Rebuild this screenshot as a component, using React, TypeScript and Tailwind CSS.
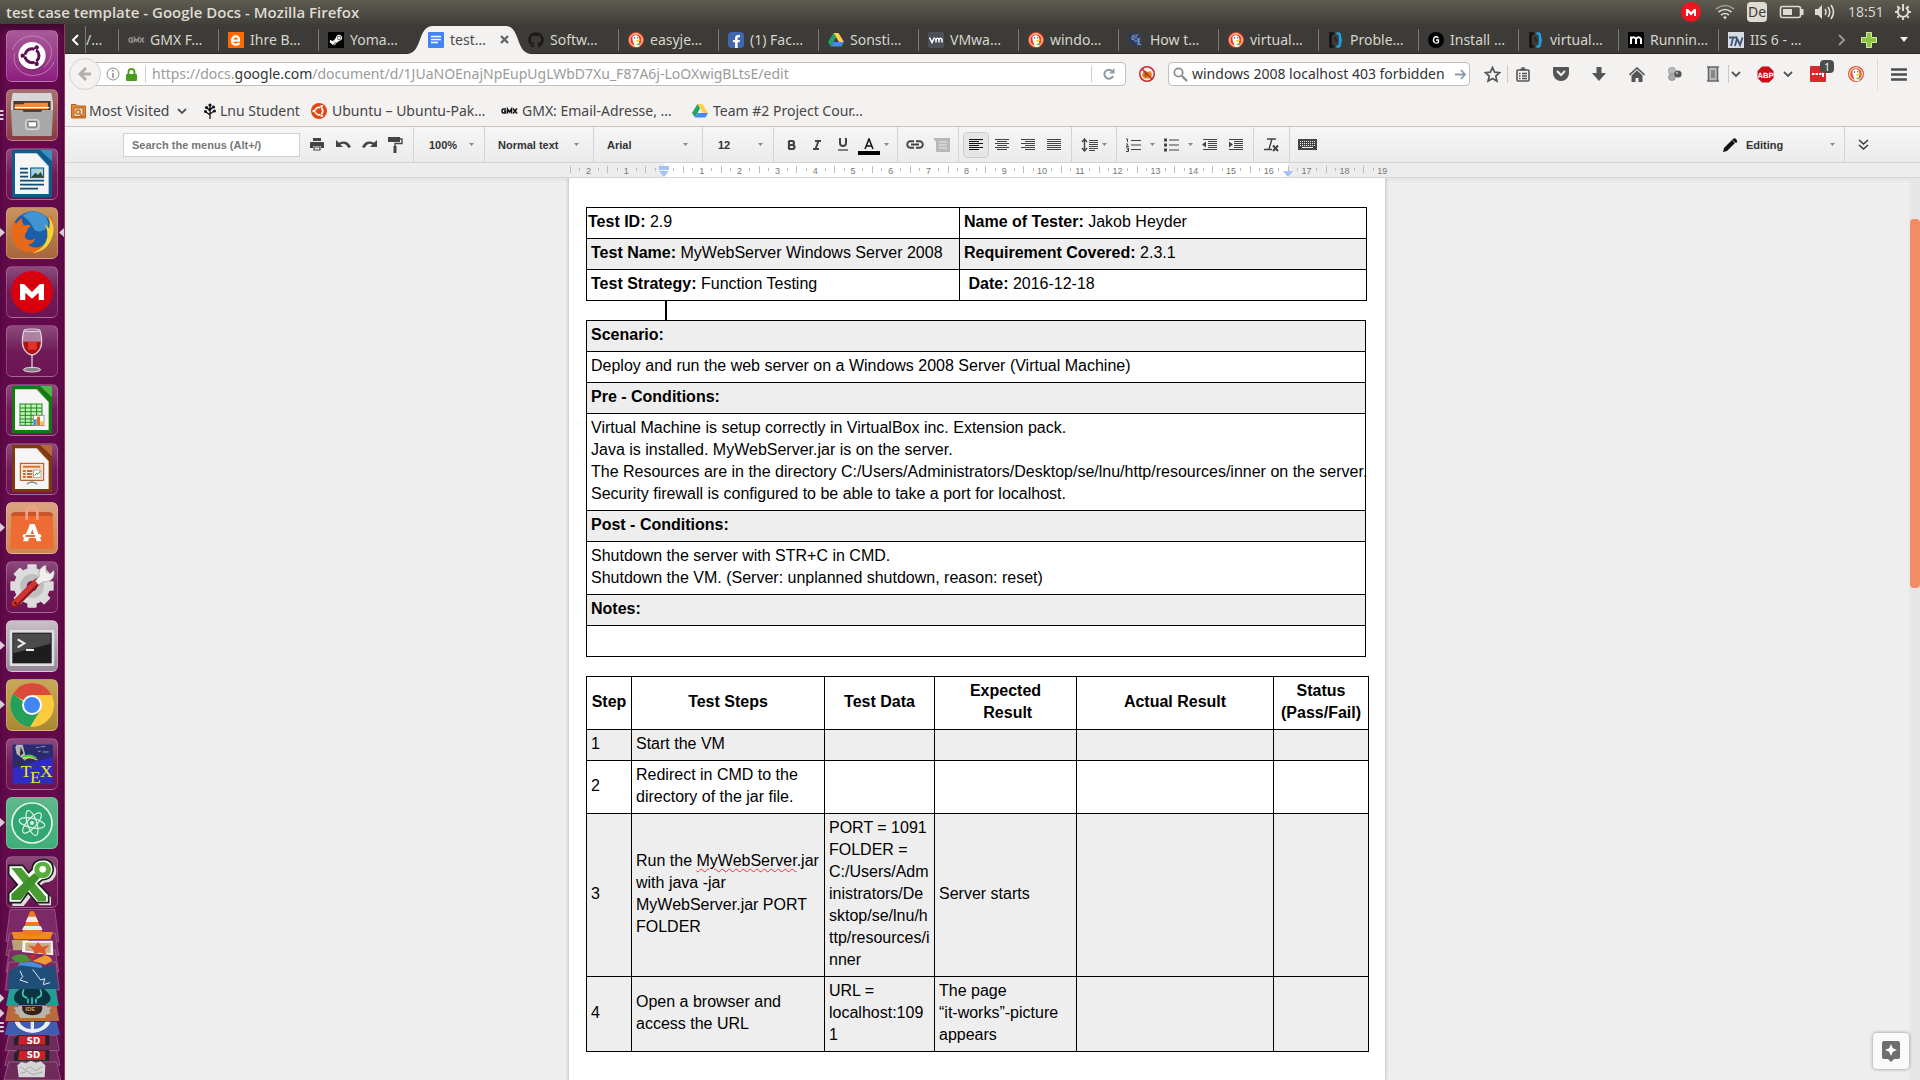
import React from "react";
import { FaFacebookF, FaGithub, FaSteamSymbol } from "react-icons/fa";

type Kids = { children?: React.ReactNode };

/* ---------- favicons ---------- */

const Duck = ({ ring = "#de5833" }: { ring?: string }) => (
  <svg width="16" height="16" viewBox="0 0 32 32">
    <circle cx="16" cy="16" r="16" fill={ring} />
    <circle cx="16" cy="16" r="12.6" fill={ring} stroke="#fff" strokeWidth="2" />
    <path d="M9 10c2-4 9-5 12-1 3 4 1 9 1 12l1 8c-4 2-8 1-9 0C11 22 8 15 9 10z" fill="#fff" />
    <path d="M17 16c3-2 8-1 9 0-2 2-5 2-8 4-2-1-2-3-1-4z" fill="#fdd20a" />
    <path d="M17 24l6-2v5l-6-1z" fill="#65bc46" />
    <circle cx="13" cy="12" r="1.5" fill="#2d4f8e" />
    <circle cx="19" cy="11.5" r="1.3" fill="#2d4f8e" />
  </svg>
);
const Drive = () => (
  <svg width="16" height="16" viewBox="0 0 32 32">
    <path d="M11 2h10l11 18H22z" fill="#ffcf48" />
    <path d="M11 2l5 9L6 29 0 20z" fill="#1fa463" />
    <path d="M11 20h21l-5 9H6z" fill="#4688f4" />
  </svg>
);
const Gmx = ({ fill }: { fill: string }) => (
  <svg width="17" height="16" viewBox="0 0 34 32">
    <g fill="none" stroke={fill} strokeWidth="3">
      <path d="M10 12H5q-3 0-3 4t3 4h4v-4H6" />
      <path d="M13 21v-9l4 6 4-6v9" />
      <path d="M24 11l8 10M32 11l-8 10" />
    </g>
  </svg>
);
const Eplus = () => (
  <svg width="16" height="16" viewBox="0 0 32 32">
    <rect width="32" height="32" fill="#ff6a00" />
    <path d="M8 17h14c2-11-13-11-14 0 0 10 11 10 15 5" fill="none" stroke="#fff" strokeWidth="4.5" />
  </svg>
);
const Steam = () => (
  <span className="flex h-4 w-4 items-center justify-center bg-black text-white">
    <FaSteamSymbol size={14} />
  </span>
);
const DocsIcon = () => (
  <svg width="16" height="16" viewBox="0 0 16 16">
    <rect width="16" height="16" rx="1" fill="#4285f4" />
    <path d="M3 4.5h10M3 7.5h10M3 10.5h7" stroke="#fff" strokeWidth="1.3" />
  </svg>
);
const Facebook = () => (
  <span className="flex h-4 w-4 items-end justify-center rounded-sm bg-[#4267b2] text-white">
    <FaFacebookF size={13} />
  </span>
);
const VmIcon = () => (
  <svg width="16" height="16" viewBox="0 0 32 32">
    <rect width="32" height="32" rx="4" fill="#4b4f57" />
    <path d="M3 11l5 10 5-10M16 21v-9M16 15q3-5 6 0v6M22 15q3-5 6 0v6" fill="none" stroke="#fff" strokeWidth="3" />
  </svg>
);
const HowTo = () => (
  <svg width="16" height="16" viewBox="0 0 32 32">
    <path d="M2 2h8l4 4v22l-6-4H2z" fill="#2c3a5c" />
    <path d="M12 4h16v24H16z" fill="#31405f" />
    <path d="M8 9l4-3v9H8zM15 6h5M16 8v6M12 18h10l-3 8M18 15l6-2M22 12v13h4" fill="none" stroke="#7fa3d3" strokeWidth="2" />
  </svg>
);
const Braces = () => (
  <svg width="18" height="16" viewBox="0 0 36 32">
    <path d="M12 3H5v26h7" fill="none" stroke="#111" strokeWidth="5" />
    <path d="M17 3q7-1 7 5v4q0 4 4 4-4 0-4 4v4q0 6-7 5" fill="none" stroke="#1ba3e6" strokeWidth="5" />
    <path d="M12 12h4v8" stroke="#151515" strokeWidth="2" fill="none" />
  </svg>
);
const GIcon = () => (
  <svg width="16" height="16" viewBox="0 0 32 32">
    <circle cx="16" cy="16" r="16" fill="#000" />
    <path d="M21 12q-5-5-9 0-3 6 1 9 5 3 8-1v-4h-5" fill="none" stroke="#fff" strokeWidth="2.6" />
  </svg>
);
const MIcon = () => (
  <svg width="16" height="16" viewBox="0 0 32 32">
    <rect width="32" height="32" fill="#000" />
    <path d="M6 24V9M6 14q5-7 10 0v10M16 14q5-7 10 0v10" fill="none" stroke="#fff" strokeWidth="4" />
  </svg>
);
const TnIcon = () => (
  <svg width="16" height="16" viewBox="0 0 32 32">
    <rect width="32" height="32" fill="#d9dde3" />
    <path d="M2 11h15M10 12L6 28M14 28l4-15 6 13 5-15" fill="none" stroke="#3b5379" strokeWidth="3.6" />
  </svg>
);

/* ---------- title bar ---------- */

function TitleBar() {
  return (
    <header className="flex h-6 shrink-0 items-center bg-gradient-to-b from-[#5e5b51] to-[#403f3a] pl-1.5 pr-2 text-[#dfdbd2]">
      <h1 className="text-[15px] font-semibold leading-6 [font-family:'Open_Sans','Noto_Sans',sans-serif]">test case template - Google Docs - Mozilla Firefox</h1>
      <div className="ml-auto flex items-center">
        <svg width="20" height="20" viewBox="0 0 20 20">
          <circle cx="10" cy="10" r="10" fill="#f0141e" />
          <path d="M5 14V7h2l3 3 3-3h2v7h-2v-3.500l-3 3-3-3V14z" fill="#fff" />
        </svg>
        <svg className="ml-3.5" width="20" height="16" viewBox="0 0 20 16" fill="none" stroke="#dfdbd2" strokeWidth="1.6">
          <path d="M1 5q9-7 18 0" opacity=".55" />
          <path d="M3.500 8q6.500-5 13 0M6 11q4-3 8 0" />
          <path d="M8 13q2-1.500 4 0l-2 2.500z" fill="#dfdbd2" stroke="none" />
        </svg>
        <span className="ml-3 flex h-5 w-5 items-center justify-center rounded-sm bg-[#dfdbd2] text-sm leading-5 text-[#3c3b37]">De</span>
        <svg className="ml-3" width="25" height="14" viewBox="0 0 25 14">
          <rect x="1.500" y="1.500" width="20" height="11" rx="2" fill="none" stroke="#dfdbd2" strokeWidth="1.600" />
          <rect x="4" y="4" width="9" height="6" fill="#dfdbd2" />
          <rect x="22" y="4" width="2.500" height="6" fill="#dfdbd2" />
        </svg>
        <svg className="ml-2.5" width="22" height="18" viewBox="0 0 22 18" fill="none" stroke="#dfdbd2" strokeWidth="1.600">
          <path d="M1 6h3l4-4v14l-4-4H1z" fill="#dfdbd2" stroke="none" />
          <path d="M11 6q2 3 0 6M14 4q3.500 5 0 10M17 2q5 7 0 14" />
        </svg>
        <time className="ml-3 w-9 text-sm leading-6 [font-family:'Open_Sans','Noto_Sans',sans-serif]">18:51</time>
        <svg className="ml-2.5" width="18" height="18" viewBox="0 0 18 18" fill="none" stroke="#dfdbd2">
          <path d="M6.200 4.300a5.200 5.200 0 1 0 5.600 0" strokeWidth="2" />
          <path d="M9 1v7" strokeWidth="2" />
          <path d="M1 9h2M15 9h2M3.300 3.300l1.400 1.400M14.700 3.300l-1.400 1.400M3.300 14.700l1.400-1.400M14.700 14.700l-1.400-1.400M9 15v2" strokeWidth="2" />
        </svg>
      </div>
    </header>
  );
}

/* ---------- launcher ---------- */

const Tile = ({ tone, label, children, run }: Kids & { tone: string; label: string; run?: "one" | "many" | "active" }) => (
  <button aria-label={label} className="relative flex w-full justify-center">
    {run === "many" && (
      <svg className="absolute left-0 top-5" width="5" height="12" viewBox="0 0 5 12">
        <path d="M0 1h3l1 1-1 1H0M0 5h3l1 1-1 1H0M0 9h3l1 1-1 1H0" fill="#d8cdd6" />
      </svg>
    )}
    {(run === "one" || run === "active") && (
      <svg className="absolute left-0 top-[21px]" width="5" height="9" viewBox="0 0 5 9">
        <path d="M0 0l5 4.500L0 9z" fill="#d8cdd6" />
      </svg>
    )}
    {run === "active" && (
      <svg className="absolute right-0 top-[21px]" width="5" height="9" viewBox="0 0 5 9">
        <path d="M5 0L0 4.500 5 9z" fill="#d8cdd6" />
      </svg>
    )}
    <span className={`block h-[52px] w-[52px] overflow-hidden rounded-md border border-white/20 ${tone}`}>
      <svg className="-m-px" width="52" height="52" viewBox="0 0 156 156">
        {children}
      </svg>
    </span>
  </button>
);

const plain = "bg-gradient-to-b from-[#8d4a7c] via-[#701b58] to-[#6c1454]";

const OfficeDoc = ({ dark, light, children }: Kids & { dark: string; light: string }) => (
  <>
    <path d="M18 6h92l28 30v112H18z" fill={dark} />
    <path d="M102 6h32q4 0 4 4v30z" fill={light} />
    <path d="M27 16h66l35 38v84H27z" fill="#f5f5f5" />
    <path d="M93 16v0l35 38" stroke={light} strokeWidth="3" />
    {children}
  </>
);

function Launcher() {
  return (
    <nav aria-label="Launcher" className="flex w-[65px] shrink-0 flex-col gap-[7px] overflow-hidden border-r border-[#8b3b66] bg-[#640a4c] pt-1.5 shadow-[inset_0_6px_6px_rgba(0,0,0,0.35)]">
      <Tile label="Search" tone="bg-gradient-to-b from-[#a65a97] to-[#8f1b80]">
        <path d="M20 60C34 14 100 0 132 46c10 20 2 50-18 66M26 70c-10 34 20 70 60 66 30-2 50-20 58-40" fill="none" stroke="#d39acb" strokeWidth="3" opacity=".7" />
        <circle cx="78" cy="80" r="41" fill="#4d0a3f" opacity=".4" />
        <circle cx="78" cy="77" r="41" fill="#fff" />
        <circle cx="78" cy="77" r="21" fill="none" stroke="#5e1150" strokeWidth="9" />
        <path d="M78 77H40M78 77l19-33M78 77l19 33" stroke="#fff" strokeWidth="5" />
        <circle cx="50" cy="77" r="6.500" fill="#5e1150" />
        <circle cx="92" cy="52" r="6.500" fill="#5e1150" />
        <circle cx="92" cy="102" r="6.500" fill="#5e1150" />
      </Tile>
      <Tile label="Files" run="many" tone="bg-gradient-to-b from-[#a5706f] to-[#8c3a42]">
        <path d="M20 12h116l5 30v24H15V42z" fill="#d6d6d6" />
        <path d="M22 36h112v32H22z" fill="#4a3a34" />
        <path d="M26 46h26l4-5h70v20H26z" fill="#f08a3c" />
        <path d="M26 54h104v4H26z" fill="#fff" />
        <path d="M15 63h34l4 6h52l4-6h32l-4 78H19z" fill="#a8a8a8" />
        <rect x="59" y="92" width="40" height="30" rx="6" fill="#bdbdbd" stroke="#dedede" strokeWidth="3" />
        <rect x="66" y="98" width="26" height="16" rx="2" fill="#fff" stroke="#555" strokeWidth="3" />
      </Tile>
      <Tile label="Writer" tone={plain}>
        <OfficeDoc dark="#0f5c8c" light="#3d8fbf">
          <path d="M42 62h24M42 74h24M42 86h24M42 98h72M42 110h72M42 122h54" stroke="#0f4d77" strokeWidth="5" />
          <rect x="74" y="60" width="39" height="29" fill="#9fd0ee" stroke="#0f4d77" strokeWidth="3" />
          <path d="M76 88l12-14 8 7 8-9 8 16z" fill="#274b33" />
          <circle cx="101" cy="69" r="4" fill="#f6d33c" />
        </OfficeDoc>
      </Tile>
      <Tile label="Firefox" run="active" tone="bg-gradient-to-b from-[#c9935f] to-[#a8663a]">
        <circle cx="80" cy="75" r="62" fill="#1c5fa8" />
        <path d="M50 26q30-24 64-2 16 16 12 36-20 20-40 10-10-26-36-44z" fill="#3f94d1" />
        <path d="M128 28q24 30 10 66-16 40-58 44-40 0-58-34-14-34 2-66 2 8 6 12 8-10 18-16-2 12 6 22 14-6 22 2-14 6-12 14-10 10-6 22 14 12 30 0-4 16-22 20 26 16 50-2 24-24 12-52 10 6 12 14 4-22-2-46z" fill="#e66a1c" />
        <path d="M128 28q24 30 10 66-16 40-58 44 38-14 44-48 2-22-8-38 10 6 14 14 4-20-2-38z" fill="#fbd32f" />
      </Tile>
      <Tile label="Mega" tone={plain}>
        <circle cx="78" cy="78" r="63" fill="#d9000d" />
        <path d="M42 102V54h12l24 24 24-24h12v48H98V80L78 98 58 80v22z" fill="#fff" />
      </Tile>
      <Tile label="Wine" tone={plain}>
        <path d="M54 16q-10 36 0 56 10 16 24 18 14-2 24-18 10-20 0-56z" fill="#c9a9c0" opacity=".65" />
        <path d="M51 50h54q0 14-6 24-8 12-21 14-13-2-21-14-6-10-6-24z" fill="#b30f14" />
        <path d="M66 50h26v24H66z" fill="#e0332c" />
        <path d="M54 16q-10 36 0 56 10 16 24 18 14-2 24-18 10-20 0-56M78 90v40" fill="none" stroke="#d9cfd6" strokeWidth="4" />
        <ellipse cx="78" cy="16" rx="24" ry="4" fill="none" stroke="#e6dfe4" strokeWidth="3" />
        <ellipse cx="78" cy="134" rx="26" ry="7" fill="#8f8089" stroke="#e0d8dd" strokeWidth="3" />
      </Tile>
      <Tile label="Calc" tone={plain}>
        <OfficeDoc dark="#157a14" light="#4cb944">
          <rect x="42" y="60" width="66" height="64" fill="#c3f0b9" stroke="#1a8a1a" strokeWidth="3" />
          <path d="M42 72h66M42 83h66M42 94h66M42 105h66M42 115h66M58 60v64M75 60v64M92 60v64" stroke="#1a8a1a" strokeWidth="3" />
          <rect x="82" y="94" width="32" height="31" fill="#fff" stroke="#777" strokeWidth="2" />
          <path d="M84 106h8v17h-8z" fill="#2a9fe0" />
          <path d="M93 98h9v25h-9z" fill="#f0641e" />
          <path d="M103 112h9v11h-9z" fill="#f2c31c" />
        </OfficeDoc>
      </Tile>
      <Tile label="Impress" tone={plain}>
        <OfficeDoc dark="#7d3a10" light="#b5683a">
          <rect x="43" y="61" width="70" height="51" fill="#fbe3d2" stroke="#b0430f" strokeWidth="3" />
          <path d="M51 71h52" stroke="#e0702c" strokeWidth="6" />
          <path d="M51 84h8M51 93h8M51 102h8M63 84h16M63 93h16M63 102h16" stroke="#b0430f" strokeWidth="5" />
          <rect x="83" y="81" width="22" height="22" fill="#fff" stroke="#8a8a8a" strokeWidth="2" />
          <path d="M86 98l6-8 4 4 7-10" fill="none" stroke="#38a038" strokeWidth="3" />
          <path d="M78 112v6M62 124q16-14 32 0" fill="none" stroke="#888" strokeWidth="4" />
        </OfficeDoc>
      </Tile>
      <Tile label="Software" run="one" tone="bg-gradient-to-b from-[#dba280] to-[#d08450]">
        <path d="M16 34l10-4h104l10 4v14H16z" fill="#c9552c" />
        <path d="M16 42h124l3 98H13z" fill="#ee6c34" />
        <path d="M62 54V28q2-12 16-12t16 12v26" fill="none" stroke="#f5a27e" strokeWidth="8" />
        <path d="M72 66h14l20 52H92L79 82l-13 36H51z" fill="#fff" />
        <rect x="50" y="96" width="56" height="12" rx="6" fill="#fff" />
        <rect x="58" y="99" width="30" height="6" rx="3" fill="#ee6c34" />
      </Tile>
      <Tile label="Settings" tone={plain}>
        <g fill="#dcdcdc">
          {[0, 45, 90, 135].map((a) => (
            <rect key={a} x="64" y="10" width="28" height="130" rx="3" transform={`rotate(${a} 78 75)`} />
          ))}
          <circle cx="78" cy="75" r="54" />
        </g>
        <circle cx="78" cy="75" r="36" fill="#bfbfbf" />
        <circle cx="78" cy="75" r="16" fill="#7c1b62" />
        <path d="M26 130l66-66" stroke="#8f1418" strokeWidth="22" strokeLinecap="round" />
        <path d="M25 127l66-66" stroke="#d23434" strokeWidth="15" strokeLinecap="round" />
        <path d="M88 60l12-14q-6-20 14-32l6-1v20l12 5 12-10q4 24-14 32-10 4-18 2L98 72z" fill="#efefef" stroke="#999" strokeWidth="2" />
        <circle cx="28" cy="126" r="4" fill="#5d0c10" />
      </Tile>
      <Tile label="Terminal" run="one" tone="bg-gradient-to-b from-[#c9c0c8] to-[#958795]">
        <rect x="11" y="30" width="134" height="108" rx="4" fill="#dedede" />
        <rect x="19" y="38" width="118" height="92" fill="#1d1d1d" />
        <path d="M22 41h112v30L22 100z" fill="#4b4b4b" />
        <path d="M35 58l20 12-20 12" fill="none" stroke="#eee" strokeWidth="6" />
        <path d="M60 90h24" stroke="#eee" strokeWidth="6" />
      </Tile>
      <Tile label="Chrome" run="one" tone="bg-gradient-to-b from-[#c7a85a] to-[#ac8832]">
        <circle cx="78" cy="78" r="66" fill="#fbcb3d" />
        <path d="M78 78L20 46Q40 12 78 12q40 0 59 36H78z" fill="#dc4a3c" />
        <path d="M78 78l-20-5L21 44Q4 76 20 108q18 32 52 36l32-52z" fill="#25a05b" />
        <circle cx="78" cy="78" r="30" fill="#fff" />
        <circle cx="78" cy="78" r="24" fill="#4285f4" />
      </Tile>
      <Tile label="Texmaker" tone={plain}>
        <rect x="20" y="20" width="120" height="118" fill="#2f2bc4" />
        <path d="M20 20h120v36L20 92z" fill="#2b2a6e" />
        <path d="M32 20l-4 8 4 20 16 12 10-10-8-30z" fill="#b5b3b8" />
        <path d="M44 26l8 20-10 8z" fill="#222" />
        <path d="M48 58q20-18 46 2-24-6-38 8z" fill="#4fd05a" />
        <path d="M50 62q22-8 44 4" stroke="#e6df3f" strokeWidth="4" fill="none" />
        <path d="M90 28h10M104 26h14M96 40h8M110 42h18" stroke="#8f8fb8" strokeWidth="3" />
        <g fill="#f0e818" fontFamily="Liberation Serif, serif" fontSize="52">
          <text x="44" y="118">T</text>
          <text x="72" y="136">E</text>
          <text x="102" y="118">X</text>
        </g>
      </Tile>
      <Tile label="Atom" run="one" tone="bg-gradient-to-b from-[#5fb88c] to-[#3fae78]">
        <circle cx="78" cy="78" r="60" fill="#2fa873" stroke="#e4f4ec" strokeWidth="5" />
        <g fill="none" stroke="#e4f4ec" strokeWidth="3.500">
          <ellipse cx="78" cy="78" rx="39" ry="14" transform="rotate(12 78 78)" />
          <ellipse cx="78" cy="78" rx="39" ry="14" transform="rotate(72 78 78)" />
          <ellipse cx="78" cy="78" rx="39" ry="14" transform="rotate(132 78 78)" />
        </g>
        <circle cx="78" cy="78" r="6" fill="#e4f4ec" />
      </Tile>
      <Tile label="Xournal" tone={plain}>
        <path d="M14 34h40l16 22 14-14q0-28 32-30 30 2 30 30-2 30-36 32l-14 10 34 34v24H96L70 116l-22 28H14v-26l26-28L14 62z" fill="#ddd" transform="translate(5 6)" />
        <path d="M8 28h42l18 22 10-10q2-28 34-30 30 2 30 32-4 28-34 30l-12 10 32 34v24H92L66 110l-22 30H8v-28l26-26L8 56z" fill="#fff" stroke="#1d1d1d" strokeWidth="5" />
        <path d="M16 36h30l74 86v14H96z" fill="#4a9e31" />
        <path d="M16 132v-18l68-62 20 10-60 70z" fill="#3f8f2a" />
        <circle cx="110" cy="42" r="25" fill="#5aae3c" />
        <circle cx="110" cy="40" r="10" fill="#fff" />
      </Tile>
      <svg className="-mt-1.5 shrink-0" width="65" height="171" viewBox="0 567 195 513">
        <g fill="#7b2a66" stroke="#a46c96" strokeWidth="2">
          <path d="M30 568h134l12 96H18z" />
          <path d="M28 640h138l10 66H18z" />
          <path d="M28 690h138l10 66H18z" />
          <path d="M26 726h142l10 84H16z" />
        </g>
        <path d="M35 636h124l-8 22H42z" fill="#f08a1c" />
        <path d="M90 574h12l26 66q-32 14-62 0z" fill="#f07a1e" />
        <path d="M84 590h24l7 16H77zM72 618h50l6 12H66z" fill="#ececec" />
        <path d="M35 660h50v30H40z" fill="#b9a27a" />
        <path d="M68 662l90 0 2 44-94-10z" fill="#f4f4f4" />
        <path d="M76 668h76v32l-76-8z" fill="#c9b08a" />
        <path d="M84 676l20 4 10-14 12 14 22-4-14 14 6 14-22-6-16 4-2-12z" fill="#e2572c" />
        <path d="M34 712q20-14 46-6l14 16-34 6q-20-2-26-16z" fill="#4b8f3a" />
        <path d="M94 722l16-14q-6-6-22-4z" fill="#c22c2c" />
        <path d="M98 722l36-16q20 4 22 16l-20 12z" fill="#f29a2e" />
        <path d="M60 728l36-2 30 10v20H44z" fill="#4a8fdc" />
        <path d="M28 752l34-16 60 8 42-8 12 71H24z" fill="#1f4f78" />
        <path d="M60 752l8 18-8 10 24 8M98 748l24 32 12-4-4 18 20-6" fill="none" stroke="#dfe8f0" strokeWidth="3" />
        <path d="M28 807h140l8 51H18z" fill="#279c92" />
        <path d="M60 807h72q26 20 18 36l-14 12H58l-14-12q-8-20 16-36z" fill="#0c3440" />
        <path d="M72 808q-12 20 10 26M120 808q12 20-10 26M84 836v14M96 832v20M108 836v14" fill="none" stroke="#3ccabb" strokeWidth="5" />
        <path d="M24 858h146l8 45H16z" fill="#b86a3c" />
        <path d="M40 862h14l4-4h80l4 4h12l-6 10 4 8-14 4-2 10H60l-4-10-12-4 4-8z" fill="#b9b4ae" />
        <path d="M66 858h60q6 26-30 28-32-2-30-28z" fill="#33221c" />
        <text x="76" y="872" fontSize="18" fontWeight="700" fill="#d9a34c" fontFamily="Liberation Sans, sans-serif">IDE</text>
        <path d="M24 905h146l10 40H14z" fill="#3f5db0" />
        <path d="M44 905h14q10 20 34 22V905h10v22q26-2 34-22h16q-10 28-54 34-46-6-54-34z" fill="#e9edf2" />
        <g fill="#6d2a5a" stroke="#a46c96" strokeWidth="2">
          <path d="M26 946h144l8 46H16z" />
          <path d="M26 992h144l10 44H14z" />
          <path d="M26 1026h144l12 54H12z" />
        </g>
        <path d="M52 946h96v30H42v-18z" fill="#232323" />
        <path d="M58 948h78v26H54z" fill="#c9202a" />
        <path d="M52 990h96v32H42v-20z" fill="#232323" />
        <path d="M58 992h78v28H54z" fill="#c9202a" />
        <g fill="#fff" fontFamily="DejaVu Sans, sans-serif" fontSize="26" fontWeight="700">
          <text x="80" y="971">SD</text>
          <text x="80" y="1015">SD</text>
        </g>
        <path d="M52 1036l12-10 14 4 14-8 16 6 14-4 14 12-2 36H56z" fill="#d5d5d5" />
        <path d="M60 1040l16 10 14-10 16 12 22-12M62 1060l20-6 16 10 30-8" stroke="#a9a9a9" strokeWidth="3" fill="none" />
        <path d="M0 822l13 13-13 13zM0 867l13 13-13 13zM0 906h10l3 3-3 3H0zM0 918h10l3 3-3 3H0zM0 931h10l3 3-3 3H0z" fill="#d8cdd6" />
      </svg>
    </nav>
  );
}

/* ---------- tabs ---------- */

const tabs: { icon: React.ReactNode; text: string; active?: boolean; bare?: boolean }[] = [
  { icon: <Gmx fill="#8f8d86" />, text: "GMX F…" },
  { icon: <Eplus />, text: "Ihre B…" },
  { icon: <Steam />, text: "Yoma…", bare: true },
  { icon: <DocsIcon />, text: "test…", active: true, bare: true },
  { icon: <FaGithub size={16} color="#1c1b19" />, text: "Softw…" },
  { icon: <Duck ring="#e0401c" />, text: "easyje…" },
  { icon: <Facebook />, text: "(1) Fac…" },
  { icon: <Drive />, text: "Sonsti…" },
  { icon: <VmIcon />, text: "VMwa…" },
  { icon: <Duck ring="#e0401c" />, text: "windo…" },
  { icon: <HowTo />, text: "How t…" },
  { icon: <Duck ring="#e0401c" />, text: "virtual…" },
  { icon: <Braces />, text: "Proble…" },
  { icon: <GIcon />, text: "Install …" },
  { icon: <Braces />, text: "virtual…" },
  { icon: <MIcon />, text: "Runnin…" },
  { icon: <TnIcon />, text: "IIS 6 - …", bare: true },
];

function TabStrip() {
  return (
    <div className="flex h-[30px] shrink-0 items-stretch border-b border-[#2b2a27] bg-[#3c3b37] pt-0.5 text-[#d8d5cd]">
      <button aria-label="Scroll tabs left" className="flex w-5 items-center justify-center">
        <svg width="8" height="12" viewBox="0 0 8 12">
          <path d="M7 1L2 6l5 5" fill="none" stroke="#fff" strokeWidth="2" />
        </svg>
      </button>
      <div className="flex w-[34px] items-center border-l border-[#7d7b74] text-sm">
        <span>/…</span>
        <span className="ml-auto h-[22px] w-px bg-[#7d7b74]" />
      </div>
      {tabs.map((t, i) =>
        t.active ? (
          <button key={i} className="relative flex w-[100px] shrink-0 items-center pl-[9px] text-sm text-[#4a4a4a]">
            <svg className="absolute -bottom-px -left-3" width="124" height="28" viewBox="0 0 124 28">
              <path d="M0 28C16 27 10 0 26 0h72c16 0 10 27 26 28z" fill="#f4f2f1" />
            </svg>
            <span className="relative w-[22px]">{t.icon}</span>
            <span className="relative whitespace-nowrap">{t.text}</span>
            <svg className="absolute right-2.5" width="9" height="9" viewBox="0 0 9 9">
              <path d="M1 1l7 7M8 1L1 8" stroke="#666" strokeWidth="2.400" />
            </svg>
          </button>
        ) : (
          <button key={i} className="flex w-[100px] shrink-0 items-center pl-[9px] text-sm">
            <span className="w-[22px] shrink-0">{t.icon}</span>
            <span className="whitespace-nowrap">{t.text}</span>
            {!t.bare && <span className="ml-auto h-[22px] w-px bg-[#7d7b74]" />}
          </button>
        )
      )}
      <div className="ml-auto flex items-center">
        <button aria-label="Scroll tabs right" className="flex w-5 justify-end pr-1">
          <svg width="8" height="12" viewBox="0 0 8 12">
            <path d="M1 1l5 5-5 5" fill="none" stroke="#98968f" strokeWidth="2" />
          </svg>
        </button>
        <button aria-label="New tab" className="flex w-[42px] justify-center pr-1">
          <svg width="16" height="16" viewBox="0 0 16 16">
            <path d="M5.500.5h5v5h5v5h-5v5h-5v-5h-5v-5h5z" fill="#8fc63f" stroke="#d5e8a8" strokeWidth="1" />
          </svg>
        </button>
        <button aria-label="List all tabs" className="flex w-7 pl-2">
          <svg width="8" height="5" viewBox="0 0 8 5">
            <path d="M0 0h8L4 5z" fill="#f4f2f1" />
          </svg>
        </button>
      </div>
    </div>
  );
}

/* ---------- navigation ---------- */

const NavBtn = ({ label, w, children }: Kids & { label: string; w: string }) => (
  <button aria-label={label} className={`relative flex h-7 shrink-0 items-center justify-center ${w}`}>
    {children}
  </button>
);
const Chevron = () => (
  <svg width="10" height="7" viewBox="0 0 10 7">
    <path d="M1 1l4 4 4-4" fill="none" stroke="#555" strokeWidth="1.800" />
  </svg>
);

function NavBar() {
  return (
    <div className="flex h-10 shrink-0 items-center bg-[#f4f2f1]">
      <button aria-label="Back" className="relative z-10 -mr-4 ml-1 flex h-8 w-8 shrink-0 items-center justify-center rounded-full border border-[#d6d3d0] bg-[#f4f2f1]">
        <svg width="14" height="14" viewBox="0 0 14 14">
          <path d="M8 1L2 7l6 6M2 7h11" fill="none" stroke="#b3b1ae" strokeWidth="3" />
        </svg>
      </button>
      <div className="flex h-6 min-w-0 flex-1 items-center rounded-sm border border-[#c2bfbc] bg-white pl-5">
        <svg className="shrink-0" width="14" height="14" viewBox="0 0 14 14">
          <circle cx="7" cy="7" r="6" fill="none" stroke="#8a8a8a" />
          <path d="M7 6v5M7 3v1.500" stroke="#8a8a8a" strokeWidth="1.500" />
        </svg>
        <svg className="ml-1.5 shrink-0" width="11" height="13" viewBox="0 0 11 13">
          <path d="M2.500 7V4a3 3 0 0 1 6 0v3" fill="none" stroke="#4a9a1c" strokeWidth="1.800" />
          <rect x="0" y="6" width="11" height="7" rx="1" fill="#4a9a1c" />
        </svg>
        <span className="ml-2 h-4 w-px bg-[#ccc]" />
        <a href="#top" aria-label="Address" className="ml-1.5 flex-1 whitespace-nowrap text-sm leading-5 text-[#9b9b9b]">
          https://docs.<span className="text-[#333]">google.com</span>/document/d/1JUaNOEnajNpEupUgLWbD7Xu_F87A6j-LoOXwigBLtsE/edit
        </a>
        <button aria-label="Reload" className="flex h-4 w-[34px] items-center justify-center border-l border-[#ccc]">
          <svg width="12" height="12" viewBox="0 0 12 12">
            <path d="M9.500 3.500A4.500 4.500 0 1 0 10 8" fill="none" stroke="#8d9aa8" strokeWidth="2" />
            <path d="M11.500 0v5.500H6z" fill="#8d9aa8" />
          </svg>
        </button>
      </div>
      <NavBtn label="Privacy" w="w-[42px]">
        <svg width="16" height="16" viewBox="0 0 32 32">
          <path d="M8 12l5-3 4 3 7-2 2 8-3 7H10l-4-6z" fill="#e08a1c" />
          <path d="M10 16l6-4 4 6-8 5z" fill="#a85a10" />
          <circle cx="16" cy="16" r="14.500" fill="none" stroke="#c8252c" strokeWidth="3" />
          <path d="M6 6l20 20" stroke="#c8252c" strokeWidth="3" />
        </svg>
      </NavBtn>
      <div className="flex h-6 w-[302px] shrink-0 items-center rounded-sm border border-[#c2bfbc] bg-white pl-1">
        <svg className="shrink-0" width="15" height="15" viewBox="0 0 15 15">
          <circle cx="5.500" cy="5.500" r="4.200" fill="none" stroke="#8c8c8c" strokeWidth="1.800" />
          <path d="M9 9l5 5" stroke="#8c8c8c" strokeWidth="2.400" />
        </svg>
        <input aria-label="Search" readOnly value="windows 2008 localhost 403 forbidden" className="ml-1 w-0 flex-1 bg-transparent text-sm leading-5 text-[#333] outline-none" />
        <button aria-label="Go" className="w-[14px]">
          <svg width="11" height="11" viewBox="0 0 11 11">
            <path d="M6 1l4 4.500L6 10M0 5.500h10" fill="none" stroke="#8d9aa8" strokeWidth="1.800" />
          </svg>
        </button>
      </div>
      <NavBtn label="Bookmark" w="ml-2 w-[29px]">
        <svg width="17" height="17" viewBox="0 0 17 17">
          <path d="M8.500 1.500l2.100 4.700 5 .5-3.800 3.400 1.100 5-4.400-2.600-4.400 2.600 1.100-5L1.400 6.700l5-.5z" fill="none" stroke="#555" strokeWidth="1.700" />
        </svg>
      </NavBtn>
      <span className="h-[18px] w-px bg-[#ccc9c6]" />
      <NavBtn label="Reading list" w="mr-1 w-[30px]">
        <svg width="14" height="15" viewBox="0 0 14 15" fill="none" stroke="#555" strokeWidth="1.600">
          <rect x="1" y="3" width="12" height="11" rx="1" />
          <path d="M4 2.500h6M5.500 1h3" />
          <path d="M3 6.500h1.500M3 9h1.500M3 11.500h1.500M6 6.500h5M6 9h5M6 11.500h5" strokeWidth="1.300" />
        </svg>
      </NavBtn>
      <NavBtn label="Pocket" w="w-[38px]">
        <svg width="16" height="14" viewBox="0 0 16 14">
          <path d="M1 0h14q1 0 1 1v5a8 8 0 0 1-16 0V1q0-1 1-1z" fill="#555" />
          <path d="M4 4l4 4 4-4" fill="none" stroke="#f4f2f1" strokeWidth="2" />
        </svg>
      </NavBtn>
      <NavBtn label="Downloads" w="w-[38px]">
        <svg width="14" height="14" viewBox="0 0 14 14">
          <path d="M4.500 0h5v6H14l-7 8-7-8h4.500z" fill="#555" />
        </svg>
      </NavBtn>
      <NavBtn label="Home" w="w-[38px]">
        <svg width="16" height="15" viewBox="0 0 16 15">
          <path d="M.500 8L8 1l7.500 7" fill="none" stroke="#555" strokeWidth="1.600" />
          <path d="M2.500 8.500L8 3.300l5.500 5.200V15H9.500v-4h-3v4h-4z" fill="#555" />
        </svg>
      </NavBtn>
      <NavBtn label="Proxy" w="w-[38px]">
        <svg width="14" height="14" viewBox="0 0 14 14">
          <circle cx="4" cy="3.800" r="3.600" fill="#bbb" stroke="#888" strokeWidth=".6" />
          <circle cx="4" cy="10" r="3.600" fill="#a8a8a8" stroke="#888" strokeWidth=".6" />
          <circle cx="10" cy="7" r="3.600" fill="#555" />
          <circle cx="9" cy="6" r="1.300" fill="#aaa" />
        </svg>
      </NavBtn>
      <NavBtn label="Script tool" w="w-[34px] pl-1">
        <svg width="12" height="16" viewBox="0 0 12 16">
          <rect x="1" y="1" width="10" height="14" fill="#bbb" />
          <path d="M0 1h12M0 15h12M1.500 1v14M10.500 1v14" stroke="#666" strokeWidth="1.600" />
          <path d="M4 5h4M4 7h4M4 9h4M4 11h4" stroke="#555" />
        </svg>
      </NavBtn>
      <span className="h-[18px] w-px bg-[#ccc9c6]" />
      <NavBtn label="Script tool menu" w="w-[14px]">
        <Chevron />
      </NavBtn>
      <NavBtn label="Ad block" w="ml-1.5 w-8">
        <svg width="17" height="17" viewBox="0 0 34 34">
          <path d="M10 1h14l9 9v14l-9 9H10l-9-9V10z" fill="#c8101a" />
          <text x="17" y="23" textAnchor="middle" fontSize="15" fontWeight="700" fill="#fff" fontFamily="Liberation Sans, sans-serif" textRendering="geometricPrecision">ABP</text>
        </svg>
      </NavBtn>
      <NavBtn label="Ad block menu" w="w-[14px]">
        <Chevron />
      </NavBtn>
      <NavBtn label="Passwords" w="w-[46px]">
        <svg width="16" height="16" viewBox="0 0 16 16">
          <rect width="16" height="16" rx="1" fill="#d9282e" />
          <path d="M2 8h2.500M5.500 8H8M9 8h2.500M13 6v5" stroke="#fff" strokeWidth="2" />
        </svg>
        <span className="absolute right-[7px] top-0 flex h-[13px] w-[14px] items-center justify-center rounded-sm bg-[#4d4d4d] text-[10px] leading-none text-white">1</span>
      </NavBtn>
      <NavBtn label="DuckDuckGo" w="w-[30px]">
        <Duck />
      </NavBtn>
      <span className="ml-1.5 h-8 w-px bg-[#dcd9d6]" />
      <NavBtn label="Menu" w="w-[42px]">
        <svg width="16" height="13" viewBox="0 0 16 13">
          <path d="M1 1.500h14M1 6.500h14M1 11.500h14" stroke="#4d4d4d" strokeWidth="2.600" strokeLinecap="round" />
        </svg>
      </NavBtn>
    </div>
  );
}

function Bookmarks() {
  const item = "flex shrink-0 items-center whitespace-nowrap text-sm leading-5 text-[#454545]";
  return (
    <nav aria-label="Bookmarks" className="flex h-[33px] shrink-0 items-center border-b border-[#c9c5c1] bg-[#f4f2f1] pl-1.5 pt-0.5">
      <a href="#most" className={`${item} w-[131px]`}>
        <svg className="mr-[3px]" width="15" height="16" viewBox="0 0 15 16">
          <path d="M.500 3V1.500H5L6.500 3h8v12H.500z" fill="#e08a3a" stroke="#b8601c" />
          <rect x="3" y="5" width="9" height="8.500" fill="#f7d9b5" stroke="#b8601c" />
          <circle cx="7" cy="9" r="2.200" fill="none" stroke="#b8601c" strokeWidth="1.200" />
          <path d="M9 11l2 2" stroke="#b8601c" strokeWidth="1.400" />
        </svg>
        Most Visited
        <span className="ml-auto mr-[15px]">
          <Chevron />
        </span>
      </a>
      <a href="#lnu" className={`${item} w-[109px]`}>
        <svg className="ml-0.5 mr-1" width="12" height="16" viewBox="0 0 12 16">
          <path d="M6 3v13M6 12L2 9M6 11l4-3M6 8L3 5M6 7l3-3" stroke="#111" strokeWidth="1.300" fill="none" />
          <g fill="#111">
            <circle cx="6" cy="2" r="1.600" />
            <circle cx="2.500" cy="4.500" r="1.600" />
            <circle cx="9.500" cy="4" r="1.600" />
            <circle cx="1.500" cy="8.500" r="1.500" />
            <circle cx="10.500" cy="8" r="1.500" />
            <circle cx="6" cy="6" r="1.500" />
          </g>
        </svg>
        Lnu Student
      </a>
      <a href="#ubuntu" className={`${item} w-[190px]`}>
        <svg className="mr-[5px]" width="16" height="16" viewBox="0 0 32 32">
          <circle cx="16" cy="16" r="16" fill="#dd4814" />
          <circle cx="16" cy="16" r="7.500" fill="none" stroke="#fff" strokeWidth="3.500" />
          <path d="M16 16H4M16 16l6-11M16 16l6 11" stroke="#dd4814" strokeWidth="2" />
          <circle cx="5.500" cy="16" r="2.600" fill="#fff" />
          <circle cx="21.500" cy="6.500" r="2.600" fill="#fff" />
          <circle cx="21.500" cy="25.500" r="2.600" fill="#fff" />
        </svg>
        Ubuntu – Ubuntu-Pak…
      </a>
      <a href="#gmx" className={`${item} w-[191px]`}>
        <span className="mr-1">
          <Gmx fill="#111" />
        </span>
        GMX: Email-Adresse, …
      </a>
      <a href="#team" className={item}>
        <span className="mr-[5px]">
          <Drive />
        </span>
        Team #2 Project Cour…
      </a>
    </nav>
  );
}

/* ---------- docs toolbar ---------- */

const Group = ({ className, children }: Kids & { className: string }) => (
  <div className={`flex h-full shrink-0 items-center border-r border-[#d4d4d4] ${className}`}>{children}</div>
);
const Tool = ({ label, on, children }: Kids & { label: string; on?: boolean }) => (
  <button
    aria-label={label}
    className={on ? "flex h-[26px] w-[26px] items-center justify-center rounded-sm border border-[#ccc] bg-[#e6e6e6]" : "flex h-[26px] w-[26px] items-center justify-center"}
  >
    {children}
  </button>
);
const Arrow = () => (
  <svg width="5" height="3" viewBox="0 0 5 3">
    <path d="M0 0h5L2.500 3z" fill="#888" />
  </svg>
);
const Lines = ({ rows, color = "#444" }: { rows: [number, number][]; color?: string }) => (
  <svg width="15" height="13" viewBox="0 0 15 13" shapeRendering="crispEdges">
    {rows.map(([x, w], i) => (
      <rect key={i} x={x} y={1 + i * 2} width={w} height="1" fill={color} />
    ))}
  </svg>
);

function Toolbar() {
  return (
    <div role="toolbar" className="flex h-9 shrink-0 items-center border-b border-[#d4d4d4] bg-gradient-to-b from-[#f6f6f6] to-[#ebebeb] text-[11px] font-bold leading-4 text-[#333] [font-family:'Liberation_Sans',Arial,sans-serif]">
      <Group className="pl-[58px] pr-[5px]">
        <input aria-label="Search the menus" placeholder="Search the menus (Alt+/)" className="mr-1 h-6 w-[177px] border border-[#d0d0d0] bg-white px-2 font-bold placeholder:text-[#777]" />
        <Tool label="Print">
          <svg width="14" height="13" viewBox="0 0 14 13">
            <path d="M3 0h8v3H3zM1 4h12q1 0 1 1v5h-3V8H3v2H0V5q0-1 1-1z" fill="#444" />
            <path d="M4 9h6v3H4z" fill="none" stroke="#444" strokeWidth="1.200" />
          </svg>
        </Tool>
        <Tool label="Undo">
          <svg width="15" height="9" viewBox="0 0 15 9">
            <path d="M0 0v7h7L4.500 4.500Q9 2 12.500 8L15 7Q11-1 3 2.800z" fill="#444" />
          </svg>
        </Tool>
        <Tool label="Redo">
          <svg width="15" height="9" viewBox="0 0 15 9">
            <path d="M15 0v7H8l2.500-2.500Q6 2 2.500 8L0 7Q4-1 12 2.800z" fill="#444" />
          </svg>
        </Tool>
        <Tool label="Paint format">
          <svg width="15" height="16" viewBox="0 0 15 16">
            <path d="M0 0h12v5H0z" fill="#444" />
            <path d="M12 2h2v4.500H7V10" fill="none" stroke="#444" strokeWidth="1.300" />
            <path d="M5.500 9h3v7h-3z" fill="#444" />
          </svg>
        </Tool>
      </Group>
      <Group className="w-[71px] justify-between pl-[15px] pr-2.5">
        100%
        <Arrow />
      </Group>
      <Group className="w-[109px] justify-between pl-[13px] pr-3.5">
        Normal text
        <Arrow />
      </Group>
      <Group className="w-[109px] justify-between pl-[13px] pr-3.5">
        Arial
        <Arrow />
      </Group>
      <Group className="w-[71px] justify-between pl-[15px] pr-2.5">
        12
        <Arrow />
      </Group>
      <Group className="w-[124px] pl-1">
        <Tool label="Bold">
          <svg width="9" height="10" viewBox="0 0 9 10">
            <path d="M1.500 1H5a2 2 0 0 1 0 4H2M2 5h3.500a2 2 0 0 1 0 4H1.500M2 1v8" fill="none" stroke="#444" strokeWidth="2.200" />
          </svg>
        </Tool>
        <Tool label="Italic">
          <svg width="10" height="10" viewBox="0 0 10 10">
            <path d="M3 1h6M1 9h6M6.500 1l-3 8" fill="none" stroke="#444" strokeWidth="2" />
          </svg>
        </Tool>
        <Tool label="Underline">
          <svg width="10" height="13" viewBox="0 0 10 13">
            <path d="M2 0v5a3 3 0 0 0 6 0V0" fill="none" stroke="#444" strokeWidth="2" />
            <path d="M0 12h10" stroke="#444" strokeWidth="1.300" />
          </svg>
        </Tool>
        <Tool label="Text color">
          <svg className="mt-1" width="22" height="17" viewBox="0 0 22 17">
            <path d="M7 11l4-10 4 10M8.500 8h5" fill="none" stroke="#111" strokeWidth="1.500" />
            <path d="M0 13h22v4H0z" fill="#000" />
          </svg>
        </Tool>
        <span className="pl-0.5">
          <Arrow />
        </span>
      </Group>
      <Group className="w-[61px] pl-1">
        <Tool label="Insert link">
          <svg width="18" height="9" viewBox="0 0 18 9">
            <path d="M8 1.200H4.500a3.300 3.300 0 0 0 0 6.600H8M10 1.200h3.500a3.300 3.300 0 0 1 0 6.600H10M5 4.500h8" fill="none" stroke="#444" strokeWidth="1.900" />
          </svg>
        </Tool>
        <Tool label="Add comment">
          <svg width="17" height="14" viewBox="0 0 17 14">
            <path d="M0 0h17v14H3V4z" fill="#b9b9b9" />
            <path d="M6 4h8M6 7h8M6 10h8" stroke="#ededed" />
          </svg>
        </Tool>
      </Group>
      <Group className="w-[113px] pl-1">
        <Tool label="Align left" on>
          <Lines color="#111" rows={[[0, 14], [0, 10], [0, 14], [0, 10], [0, 14], [0, 10]]} />
        </Tool>
        <Tool label="Align center">
          <Lines rows={[[0, 14], [2, 10], [0, 14], [2, 10], [0, 14], [2, 10]]} />
        </Tool>
        <Tool label="Align right">
          <Lines rows={[[0, 14], [4, 10], [0, 14], [4, 10], [0, 14], [4, 10]]} />
        </Tool>
        <Tool label="Justify">
          <Lines rows={[[0, 14], [0, 14], [0, 14], [0, 14], [0, 14], [0, 14]]} />
        </Tool>
      </Group>
      <Group className="w-[45px] pl-1">
        <Tool label="Line spacing">
          <svg width="17" height="14" viewBox="0 0 17 14">
            <path d="M3.500 1v12M1 4l2.500-3L6 4M1 10l2.500 3L6 10" fill="none" stroke="#444" strokeWidth="1.400" />
            <path d="M8 2.500h9M8 4.500h9M8 6.500h9M8 8.500h9M8 10.500h9M8 12.500h6" stroke="#444" />
          </svg>
        </Tool>
        <Arrow />
      </Group>
      <Group className="w-[137px] pl-[3px]">
        <Tool label="Numbered list">
          <svg width="15" height="14" viewBox="0 0 15 14">
            <path d="M5 2.500h10M5 7h10M5 11.500h10" stroke="#444" strokeWidth="1.200" />
            <path d="M0 1h1.500v3M0 6h2L.500 8.500H3M0 10h2.500v3.500H0M1 11.700h1.500" fill="none" stroke="#444" />
          </svg>
        </Tool>
        <span className="flex w-3 justify-center">
          <Arrow />
        </span>
        <Tool label="Bulleted list">
          <svg width="15" height="14" viewBox="0 0 15 14">
            <path d="M5 2h10M5 7h10M5 12h10" stroke="#444" strokeWidth="1.200" />
            <path d="M0 .5h3v3H0zM0 5.500h3v3H0zM0 10.500h3v3H0z" fill="#444" />
          </svg>
        </Tool>
        <span className="flex w-3 justify-center">
          <Arrow />
        </span>
        <Tool label="Decrease indent">
          <svg width="15" height="13" viewBox="0 0 15 13">
            <path d="M1 1.500h14M6 3.500h9M6 5.500h9M6 7.500h9M6 9.500h9M1 11.500h14" stroke="#444" />
            <path d="M4 3.500v6L0 6.500z" fill="#444" />
          </svg>
        </Tool>
        <Tool label="Increase indent">
          <svg width="15" height="13" viewBox="0 0 15 13">
            <path d="M1 1.500h14M6 3.500h9M6 5.500h9M6 7.500h9M6 9.500h9M1 11.500h14" stroke="#444" />
            <path d="M1 3.500v6l4-3z" fill="#444" />
          </svg>
        </Tool>
      </Group>
      <Group className="w-9 pl-1">
        <Tool label="Clear formatting">
          <svg width="15" height="14" viewBox="0 0 15 14">
            <path d="M3 1h9M8 1L5 11M0 11.500h8" fill="none" stroke="#444" strokeWidth="1.400" />
            <path d="M9 7.500l5 5.500M14 7.500L9 13" stroke="#444" strokeWidth="2" />
          </svg>
        </Tool>
      </Group>
      <div className="pl-1">
        <Tool label="Input tools">
          <svg width="19" height="11" viewBox="0 0 19 11">
            <rect width="19" height="11" fill="#444" />
            <path d="M2 2.500h15M2 4.500h15M2 6.500h15" stroke="#eee" strokeDasharray="1 1" />
            <path d="M4 8.500h11" stroke="#eee" />
          </svg>
        </Tool>
      </div>
      <button className="ml-auto flex h-full w-[124px] items-center border-r border-[#d4d4d4] pl-0.5">
        <svg className="mr-2" width="15" height="14" viewBox="0 0 15 14">
          <path d="M0 14l1-4 8-8 3 3-8 8zM10 1q1.500-1.500 3 0t1 3L13 5l-4-3.500z" fill="#111" />
        </svg>
        Editing
        <span className="ml-auto mr-[9px]">
          <Arrow />
        </span>
      </button>
      <button aria-label="Hide menus" className="flex w-[75px] pl-[13px]">
        <svg width="11" height="11" viewBox="0 0 11 11">
          <path d="M1 1l4.500 4L10 1M1 6l4.500 4L10 6" fill="none" stroke="#333" strokeWidth="1.400" />
        </svg>
      </button>
    </div>
  );
}

const CM = 37.8;
const ZERO = 100;

function Ruler() {
  const ticks = Array.from({ length: 88 }, (_, i) => i - 10).filter((q) => q % 4 !== 0);
  const nums = [-2, -1, ...Array.from({ length: 19 }, (_, i) => i + 1)];
  return (
    <div className="flex h-[15px] shrink-0 justify-center border-b border-[#d4d4d4] bg-[#ededed] pr-[33px]">
      <svg width="824" height="14" viewBox="0 0 824 14">
        <rect x={ZERO} width="624" height="14" fill="#fff" />
        {ticks.map((q) => {
          const tall = q % 2 === 0;
          return <rect key={q} x={Math.round(ZERO + (q * CM) / 4)} y={tall ? 3 : 5} width="1" height={tall ? 7 : 3} fill="#bbb" />;
        })}
        {nums.map((n) => (
          <text key={n} x={ZERO + n * CM} y="11" textAnchor="middle" fontSize="9" fill="#777" fontFamily="Liberation Sans, Arial, sans-serif">
            {Math.abs(n)}
          </text>
        ))}
        <path d="M95 3h10v4H95zM95 8h10l-5 6z" fill="#a4c2f4" />
        <path d="M719 8h10l-5 6z" fill="#a4c2f4" />
      </svg>
    </div>
  );
}

/* ---------- document ---------- */

const cell = "border border-black px-1 pt-[3px] pb-[5px]";
const shade = "bg-[#eeeeee]";

const sections: { title: string; lines: string[] }[] = [
  { title: "Scenario:", lines: ["Deploy and run the web server on a Windows 2008 Server (Virtual Machine)"] },
  {
    title: "Pre - Conditions:",
    lines: [
      "Virtual Machine is setup correctly in VirtualBox inc. Extension pack.",
      "Java is installed. MyWebServer.jar is on the server.",
      "The Resources are in the directory C:/Users/Administrators/Desktop/se/lnu/http/resources/inner on the server.",
      "Security firewall is configured to be able to take a port for localhost.",
    ],
  },
  { title: "Post - Conditions:", lines: ["Shutdown the server with STR+C in CMD.", "Shutdown the VM. (Server: unplanned shutdown, reason: reset)"] },
  { title: "Notes:", lines: ["\u00a0"] },
];

const Block = ({ lines }: { lines: React.ReactNode[] }) => (
  <>
    {lines.map((l, i) => (
      <p key={i} className="whitespace-nowrap">
        {l}
      </p>
    ))}
  </>
);

const steps: { grey: boolean; cells: React.ReactNode[][] }[] = [
  { grey: true, cells: [["Start the VM"], [], []] },
  { grey: false, cells: [["Redirect in CMD to the", "directory of the jar file."], [], []] },
  {
    grey: true,
    cells: [
      [
        <>
          Run the <span className="underline decoration-red-500 decoration-wavy decoration-1 underline-offset-2">MyWebServer</span>.jar
        </>,
        "with java -jar",
        "MyWebServer.jar PORT",
        "FOLDER",
      ],
      ["PORT = 1091", "FOLDER =", "C:/Users/Adm", "inistrators/De", "sktop/se/lnu/h", "ttp/resources/i", "nner"],
      ["Server starts"],
    ],
  },
  { grey: true, cells: [["Open a browser and", "access the URL"], ["URL =", "localhost:109", "1"], ["The page", "“it-works”-picture", "appears"]] },
];

function Page() {
  return (
    <article className="w-[816px] shrink-0 bg-white px-[17px] pt-[29px] text-base leading-[22px] text-black shadow-[0_0_3px_1px_rgba(0,0,0,0.18)] [font-family:'Liberation_Sans',Arial,sans-serif]">
      <table className="w-[781px] table-fixed border-collapse">
        <colgroup>
          <col className="w-[373px]" />
          <col />
        </colgroup>
        <tbody>
          <tr>
            <td className="border border-black pb-[5px] pl-px pt-[3px]"><b>Test ID:</b> 2.9</td>
            <td className={cell}><b>Name of Tester:</b> Jakob Heyder</td>
          </tr>
          <tr className={shade}>
            <td className={cell}><b>Test Name:</b> MyWebServer Windows Server 2008</td>
            <td className={cell}><b>Requirement Covered:</b> 2.3.1</td>
          </tr>
          <tr>
            <td className={cell}><b>Test Strategy:</b> Function Testing</td>
            <td className={cell}><b>&nbsp;Date:</b> 2016-12-18</td>
          </tr>
        </tbody>
      </table>
      <div className="h-[19px] pl-[79px]">
        <div className="h-full w-0.5 bg-black" />
      </div>
      <table className="w-[780px] table-fixed border-collapse">
        <tbody>
          {sections.map((s) => (
            <React.Fragment key={s.title}>
              <tr className={shade}>
                <th className={`${cell} text-left`}>{s.title}</th>
              </tr>
              <tr>
                <td className={cell}>
                  <Block lines={s.lines} />
                </td>
              </tr>
            </React.Fragment>
          ))}
        </tbody>
      </table>
      <table className="mt-[19px] w-[783px] table-fixed border-collapse">
        <colgroup>
          <col className="w-[45px]" />
          <col className="w-[193px]" />
          <col className="w-[110px]" />
          <col className="w-[142px]" />
          <col className="w-[197px]" />
          <col />
        </colgroup>
        <thead>
          <tr>
            <th className={cell}>Step</th>
            <th className={cell}>Test Steps</th>
            <th className={cell}>Test Data</th>
            <th className={cell}>
              <Block lines={["Expected", "\u00a0Result"]} />
            </th>
            <th className={cell}>Actual Result</th>
            <th className={cell}>
              <Block lines={["Status", "(Pass/Fail)"]} />
            </th>
          </tr>
        </thead>
        <tbody>
          {steps.map((s, i) => (
            <tr key={i} className={s.grey ? shade : ""}>
              <td className={cell}>{i + 1}</td>
              {s.cells.map((c, j) => (
                <td key={j} className={cell}>
                  <Block lines={c} />
                </td>
              ))}
              <td className={cell} />
              <td className={cell} />
            </tr>
          ))}
        </tbody>
      </table>
    </article>
  );
}

export default function App() {
  return (
    <div className="flex h-screen flex-col overflow-hidden bg-[#eee] [font-family:'Noto_Sans','Open_Sans',sans-serif]">
      <TitleBar />
      <div className="flex min-h-0 flex-1">
        <Launcher />
        <div className="flex min-w-0 flex-1 flex-col">
          <TabStrip />
          <NavBar />
          <Bookmarks />
          <Toolbar />
          <Ruler />
          <main className="relative flex min-h-0 flex-1">
            <div className="flex flex-1 justify-center overflow-hidden bg-[#eee] pr-[21px] shadow-[inset_0_3px_3px_rgba(0,0,0,0.04)]">
              <Page />
            </div>
            <div className="w-2.5 bg-[#e6e6e6] pt-[41px]">
              <div className="h-[369px] rounded-sm bg-[#f08c66]" />
            </div>
            <button aria-label="Explore" className="absolute bottom-[11px] right-[11px] flex h-9 w-9 items-center justify-center rounded-sm bg-[#fafafa] shadow-[0_0_3px_1px_rgba(0,0,0,0.25)]">
              <svg width="18" height="21" viewBox="0 0 18 21">
                <path d="M2 0h14q2 0 2 2v14q0 2-2 2h-4l-3 3-3-3H2q-2 0-2-2V2q0-2 2-2z" fill="#6e6e6e" />
                <path d="M9 3l1.800 4.200L15 9l-4.200 1.800L9 15l-1.800-4.200L3 9l4.200-1.800z" fill="#fff" />
              </svg>
            </button>
          </main>
        </div>
      </div>
    </div>
  );
}
